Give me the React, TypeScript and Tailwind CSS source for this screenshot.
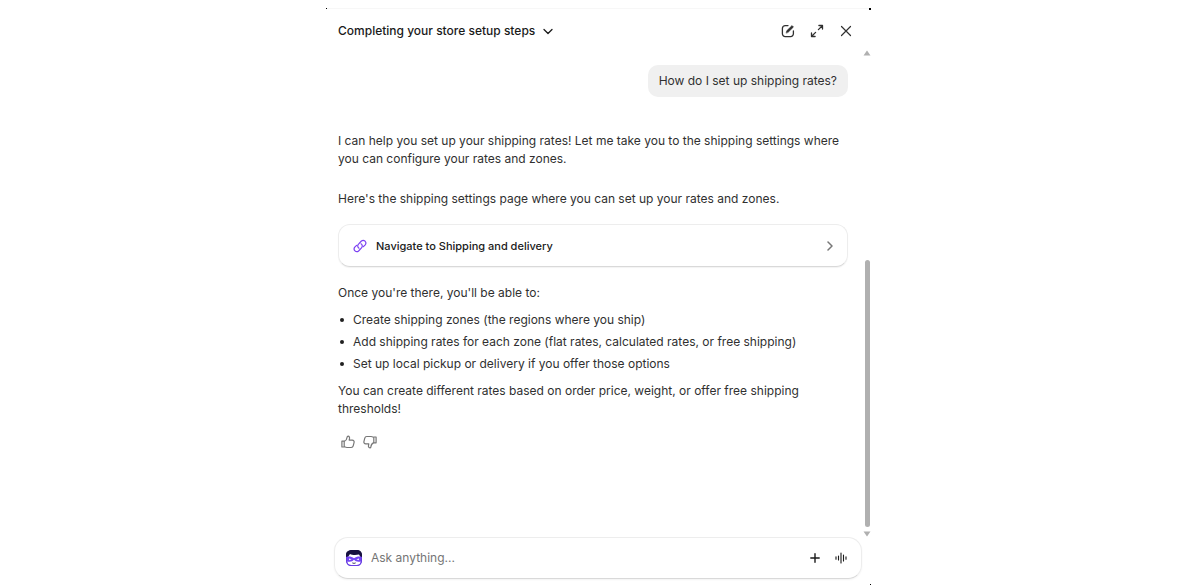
import { useState } from "react";
import type { ReactNode } from "react";

const steps = [
  "Create shipping zones (the regions where you ship)",
  "Add shipping rates for each zone (flat rates, calculated rates, or free shipping)",
  "Set up local pickup or delivery if you offer those options",
];

function IconButton({ label, children }: { label: string; children: ReactNode }) {
  return (
    <button type="button" aria-label={label} className="flex size-4 items-center justify-center">
      {children}
    </button>
  );
}

function ThumbIcon({ className }: { className?: string }) {
  return (
    <svg viewBox="0 0 14 14" className={className} fill="none" stroke="currentColor" strokeWidth="1.2" strokeLinejoin="round">
      <path d="M.9 6.200h2.300v5.800H.9zM3.200 6.400c1.900-.8 2.700-2 2.900-4.200.1-.7.5-1 1-1 1.300 0 1.600 1.200 1.400 2.500L8.200 5.200h3.100c1.300 0 2.100 1 1.800 2.200l-.9 3.500c-.2 1-1 1.600-2 1.600H6c-1.200 0-1.800-.4-2.800-.9" />
    </svg>
  );
}

function Avatar() {
  return (
    <svg viewBox="0 0 18 18" className="size-[18px] shrink-0" aria-hidden="true">
      <rect x="1.500" y="2" width="15" height="14.500" rx="4.500" fill="#fff" stroke="#5a35c9" />
      <path d="M1 8V5.500C1 2.500 3.600 1 7 1h5c3 0 5 2 5 4.500V8h-1.500L14 5.500C10.500 6.300 7 6 5 5L3 8z" fill="#17113f" />
      <path d="M4 7.500C6 6.300 12 6.300 14 6.600v2H4z" fill="#fff" />
      <path d="M1.500 7.800c2.800-.6 5.200-.2 7.500 1.400 2.300-1.600 4.700-2 7.500-1.400v4.400c-3 1-6 .6-7.500-1.400-1.500 2-4.500 2.400-7.500 1.400z" fill="#7545f5" />
      <path d="M4 9.500l2.600.8-2.400 1zM14 9.500l-2.600.8 2.400 1z" fill="#fff" />
      <path d="M1.700 12c.2 3 1.700 4.500 4.300 4.500h6c2.600 0 4.100-1.500 4.300-4.500" fill="none" stroke="#6a3fe8" strokeWidth="1.100" />
      <path d="M7.300 13.900q1.700 1 3.400 0" fill="none" stroke="#17113f" strokeWidth=".8" />
    </svg>
  );
}

function Header() {
  return (
    <header className="flex h-[43px] shrink-0 items-center justify-between pr-[17px] pl-3 text-[#303030]">
      <button type="button" className="flex items-center gap-2 font-medium text-[#1a1a1a]">
        Completing your store setup steps
        <svg viewBox="0 0 10 10" className="size-2.5" fill="none" stroke="currentColor" strokeWidth="1.3" strokeLinecap="round" strokeLinejoin="round">
          <path d="M1 3.500l4 4 4-4" />
        </svg>
      </button>
      <div className="flex items-center gap-[13px]">
        <IconButton label="New conversation">
          <svg viewBox="0 0 14 14" className="size-3.5" fill="none" stroke="currentColor" strokeWidth="1.3" strokeLinecap="round">
            <path d="M7 1.600H4.200A2.800 2.800 0 0 0 1.400 4.400v5.400a2.800 2.800 0 0 0 2.800 2.800h5.400a2.800 2.800 0 0 0 2.800-2.800V7" />
            <path d="M5.200 8.800l.5-2L11 1.500l1.500 1.500-5.300 5.300z" fill="currentColor" strokeWidth=".5" strokeLinejoin="round" />
          </svg>
        </IconButton>
        <IconButton label="Expand">
          <svg viewBox="0 0 14 14" className="size-3.5" fill="none" stroke="currentColor" strokeWidth="1.3" strokeLinecap="round" strokeLinejoin="round">
            <path d="M8.900 1.500h3.600v3.600M12.300 1.700L8.400 5.600M5.100 12.500H1.500V8.900M1.700 12.300l3.900-3.900" />
          </svg>
        </IconButton>
        <IconButton label="Close">
          <svg viewBox="0 0 14 14" className="size-3.5" fill="none" stroke="currentColor" strokeWidth="1.2" strokeLinecap="round">
            <path d="M2.500 2.500l9 9M11.500 2.500l-9 9" />
          </svg>
        </IconButton>
      </div>
    </header>
  );
}

function ScrollTrack() {
  return (
    <div className="flex w-2 shrink-0 flex-col items-center" aria-hidden="true">
      <svg viewBox="0 0 8 6" className="h-1.5 w-2 shrink-0" fill="#b0b0b0">
        <path d="M4 .5L7.500 5.500h-7z" />
      </svg>
      <div className="grow-[203]" />
      <div className="w-[5px] grow-[266] rounded-full bg-[#b0b0b0]" />
      <svg viewBox="0 0 8 6" className="mt-1 h-1.5 w-2 shrink-0" fill="#b0b0b0">
        <path d="M4 5.500L7.500 .5h-7z" />
      </svg>
    </div>
  );
}

function Conversation() {
  return (
    <div className="flex min-w-0 grow flex-col pt-[15px] pr-[15px] pl-3">
      <p className="self-end rounded-[10px] bg-[#f0f0f0] px-[11px] py-[7px]">How do I set up shipping rates?</p>
      <p className="mt-[35px]">
        I can help you set up your shipping rates! Let me take you to the shipping settings where you can configure your
        rates and zones.
      </p>
      <p className="mt-[22px]">Here's the shipping settings page where you can set up your rates and zones.</p>
      <a
        href="#shipping"
        className="mt-4 flex h-[43px] items-center rounded-xl border border-[#ededed] border-b-[#d9d9d9] px-3.5 text-[11px] font-medium text-[#202020] shadow-[0_1px_1px_#0000000d]"
      >
        <svg viewBox="0 0 14 14" className="mr-[9px] size-3.5" fill="none" stroke="#7a3ff2" strokeWidth="1.2" strokeLinecap="round">
          <path d="M6 9.200a2.600 2.600 0 0 1-.5-4.100L8.400 2a2.700 2.700 0 0 1 3.800 3.800L10.400 7.600" />
          <path d="M8 4.800a2.600 2.600 0 0 1 .5 4.100L5.600 12a2.700 2.700 0 0 1-3.800-3.800L3.600 6.400" />
        </svg>
        <span className="grow">Navigate to Shipping and delivery</span>
        <svg viewBox="0 0 8 10" className="h-2.5 w-2" fill="none" stroke="#777" strokeWidth="1.5" strokeLinecap="round" strokeLinejoin="round">
          <path d="M3 1l4 4-4 4" />
        </svg>
      </a>
      <p className="mt-[17px]">Once you're there, you'll be able to:</p>
      <ul className="mt-[9px] flex flex-col gap-1">
        {steps.map((step) => (
          <li key={step} className="flex items-center">
            <span className="mr-[9px] ml-0.5 size-1 rounded-full bg-[#202020]" />
            {step}
          </li>
        ))}
      </ul>
      <p className="mt-[9px]">
        You can create different rates based on order price, weight, or offer free shipping thresholds!
      </p>
      <div className="mt-4 flex gap-1.5 pl-0.5 text-[#777]">
        <IconButton label="Good response">
          <ThumbIcon className="size-3.5" />
        </IconButton>
        <IconButton label="Bad response">
          <ThumbIcon className="size-3.5 rotate-180" />
        </IconButton>
      </div>
    </div>
  );
}

function Composer() {
  const [message, setMessage] = useState("");

  return (
    <form className="mr-[9px] mb-1.5 ml-2 flex h-[42px] shrink-0 items-center rounded-[14px] border border-[#ededed] border-b-[#d9d9d9] pr-3 pl-2.5 shadow-[0_1px_2px_#0000000d]">
      <Avatar />
      <input
        aria-label="Ask anything"
        placeholder="Ask anything..."
        value={message}
        onChange={(e) => setMessage(e.target.value)}
        className="ml-2 min-w-0 grow outline-none placeholder:text-[#757575]"
      />
      <div className="flex items-center gap-2.5 text-[#1a1a1a]">
        <IconButton label="Add attachment">
          <svg viewBox="0 0 10 10" className="size-2.5" stroke="currentColor" strokeWidth="1.4" strokeLinecap="round">
            <path d="M5 .8v8.400M.8 5h8.400" />
          </svg>
        </IconButton>
        <IconButton label="Voice input">
          <svg viewBox="0 0 12 12" className="size-3" stroke="currentColor" strokeWidth="1.1" strokeLinecap="round">
            <path d="M1 4.800v2.400M3.500 4v4M6 1v10M8.500 3v6M11 4.800v2.400" />
          </svg>
        </IconButton>
      </div>
    </form>
  );
}

export default function App() {
  return (
    <div className="flex h-screen justify-center bg-white pt-2 pr-[3px] font-[Inter,sans-serif] text-xs leading-[18px] text-[#303030]">
      <main className="relative flex w-full max-w-[545px] flex-col border-t border-[#f7f7f7]">
        <span className="absolute -top-px left-0 size-px bg-black" />
        <span className="absolute -top-px right-0 size-0.5 bg-black" />
        <span className="absolute right-0 bottom-0 size-px bg-black" />
        <Header />
        <div className="-mt-0.5 flex min-h-0 grow">
          <Conversation />
          <ScrollTrack />
        </div>
        <Composer />
      </main>
    </div>
  );
}
